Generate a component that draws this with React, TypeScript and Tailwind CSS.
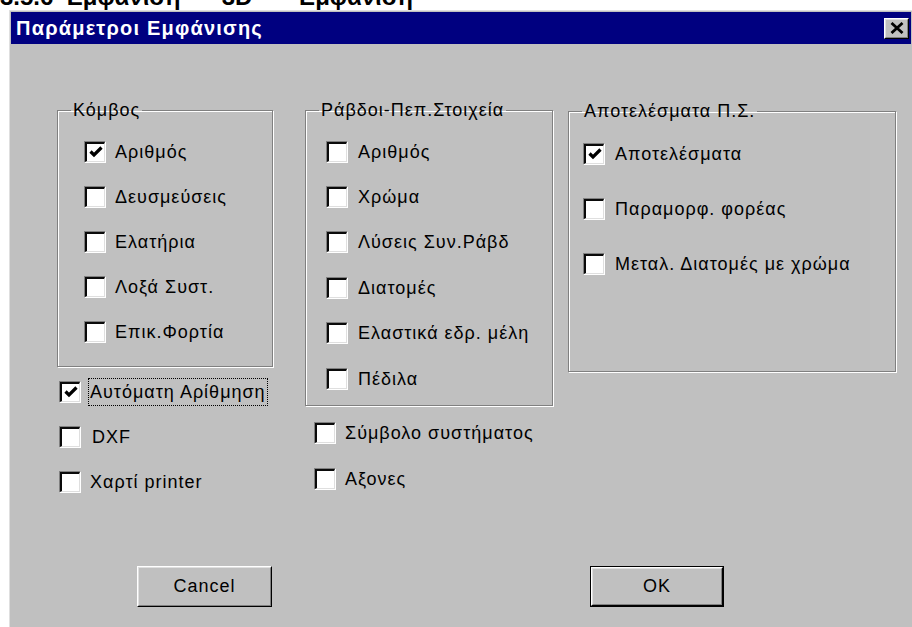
import type { ReactNode } from "react";

function CheckBox({ checked }: { checked?: boolean }) {
  return (
    <span className="flex h-[22px] w-[22px] shrink-0 border border-t-[#808080] border-l-[#808080] border-b-white border-r-white">
      <span className="flex flex-1 items-center justify-center border-t-2 border-l-2 border-r border-b border-t-[#0a0a0a] border-l-[#0a0a0a] border-r-[#dfdfdf] border-b-[#dfdfdf] bg-white">
        {checked && (
          <svg width="14" height="12" viewBox="0 0 14 12">
            <path d="M1.5 5.5 L5 9 L12.5 1.5" stroke="#000" strokeWidth="3.2" fill="none" />
          </svg>
        )}
      </span>
    </span>
  );
}

function Option({
  label,
  checked,
  gap = "gap-[10px]",
  row = "h-[45px]",
  focused,
}: {
  label: string;
  checked?: boolean;
  gap?: string;
  row?: string;
  focused?: boolean;
}) {
  return (
    <div className={`flex items-center ${row} ${gap}`}>
      <CheckBox checked={checked} />
      {focused ? (
        <span className="border border-dotted border-black px-[1px] leading-[26px]">{label}</span>
      ) : (
        <span className="leading-[22px]">{label}</span>
      )}
    </div>
  );
}

function Group({ title, className, children }: { title: string; className: string; children: ReactNode }) {
  return (
    <fieldset className="border border-[#808080] shadow-[1px_1px_0_#fff,inset_1px_1px_0_#fff]">
      <legend className="ml-[13px] px-[2px] leading-[20px]">{title}</legend>
      <div className={className}>{children}</div>
    </fieldset>
  );
}

function Button({ children, isDefault }: { children: ReactNode; isDefault?: boolean }) {
  const face = (
    <span className="flex h-full w-full border border-t-white border-l-white border-r-black border-b-black">
      <span className="flex flex-1 items-center justify-center border border-t-[#dfdfdf] border-l-[#dfdfdf] border-r-[#808080] border-b-[#808080] bg-[#c0c0c0]">
        {children}
      </span>
    </span>
  );
  return isDefault ? (
    <div className="flex h-[41px] w-[134px] border border-black">{face}</div>
  ) : (
    <div className="flex h-[41px] w-[135px]">{face}</div>
  );
}

export default function App() {
  return (
    <div className="h-[627px] w-[912px] overflow-hidden bg-white font-['Liberation_Sans',Arial,sans-serif] text-[18px] tracking-[1px] text-black">
      {/* heading of the manual page above the dialog */}
      <div className="h-[10px] overflow-hidden">
        <div className="-mt-[15px] whitespace-pre text-[24px] font-bold leading-[24px] tracking-normal">
          {"3.5.6  Εμφάνιση   -  3D  –   Εμφάνιση"}
        </div>
      </div>

      <div className="ml-[9px] h-[617px] border-l border-t border-[#dfdfdf] bg-[#c0c0c0] p-[1px]">
        <div className="flex h-[32px] items-center justify-between bg-[#000080] pl-[5px] pr-[2px]">
          <span className="text-[20px] font-bold tracking-[1.2px] text-white">Παράμετροι Εμφάνισης</span>
          <button className="flex h-[21px] w-[25px] border border-t-white border-l-white border-r-black border-b-black bg-[#c0c0c0]">
            <span className="flex flex-1 items-center justify-center border border-t-[#dfdfdf] border-l-[#dfdfdf] border-r-[#808080] border-b-[#808080]">
              <svg width="14" height="12" viewBox="0 0 14 12">
                <path d="M1.5 1 L12.5 11 M12.5 1 L1.5 11" stroke="#000" strokeWidth="2.8" />
              </svg>
            </span>
          </button>
        </div>

        <div className="pl-[46px] pt-[56px]">
          <div className="flex h-[466px] items-start">
            <div className="flex w-[216px] flex-col">
              <Group title="Κόμβος" className="h-[246px] pl-[26px] pt-[9px]">
                <Option label="Αριθμός" checked gap="gap-[9px]" />
                <Option label="Δευσμεύσεις" gap="gap-[9px]" />
                <Option label="Ελατήρια" gap="gap-[9px]" />
                <Option label="Λοξά Συστ." gap="gap-[9px]" />
                <Option label="Επικ.Φορτία" gap="gap-[9px]" />
              </Group>
              <div className="ml-[2px] mt-[2px]">
                <Option label="Αυτόματη Αρίθμηση" checked focused gap="gap-[7px]" />
                <Option label="DXF" gap="gap-[11px]" />
                <Option label="Χαρτί printer" gap="gap-[9px]" />
              </div>
            </div>

            <div className="ml-[32px] flex w-[248px] flex-col">
              <Group title="Ράβδοι-Πεπ.Στοιχεία" className="h-[285px] pl-[20px] pt-[9px]">
                <Option label="Αριθμός" row="h-[45.4px]" />
                <Option label="Χρώμα" row="h-[45.4px]" />
                <Option label="Λύσεις Συν.Ράβδ" row="h-[45.4px]" />
                <Option label="Διατομές" row="h-[45.4px]" />
                <Option label="Ελαστικά εδρ. μέλη" row="h-[45.4px]" />
                <Option label="Πέδιλα" row="h-[45.4px]" />
              </Group>
              <div className="ml-[9px] mt-[4px]">
                <Option label="Σύμβολο συστήματος" row="h-[46px]" gap="gap-[9px]" />
                <Option label="Αξονες" row="h-[46px]" gap="gap-[9px]" />
              </div>
            </div>

            <div className="ml-[15px] mt-[1px] flex w-[328px] flex-col">
              <Group title="Αποτελέσματα Π.Σ." className="h-[250px] pl-[14px] pt-[5px]">
                <Option label="Αποτελέσματα" checked row="h-[55px]" />
                <Option label="Παραμορφ. φορέας" row="h-[55px]" />
                <Option label="Μεταλ. Διατομές με χρώμα" row="h-[55px]" />
              </Group>
            </div>
          </div>

          <div className="flex items-center">
            <div className="ml-[80px]">
              <Button>Cancel</Button>
            </div>
            <div className="ml-[318px]">
              <Button isDefault>OK</Button>
            </div>
          </div>
        </div>
      </div>
    </div>
  );
}
